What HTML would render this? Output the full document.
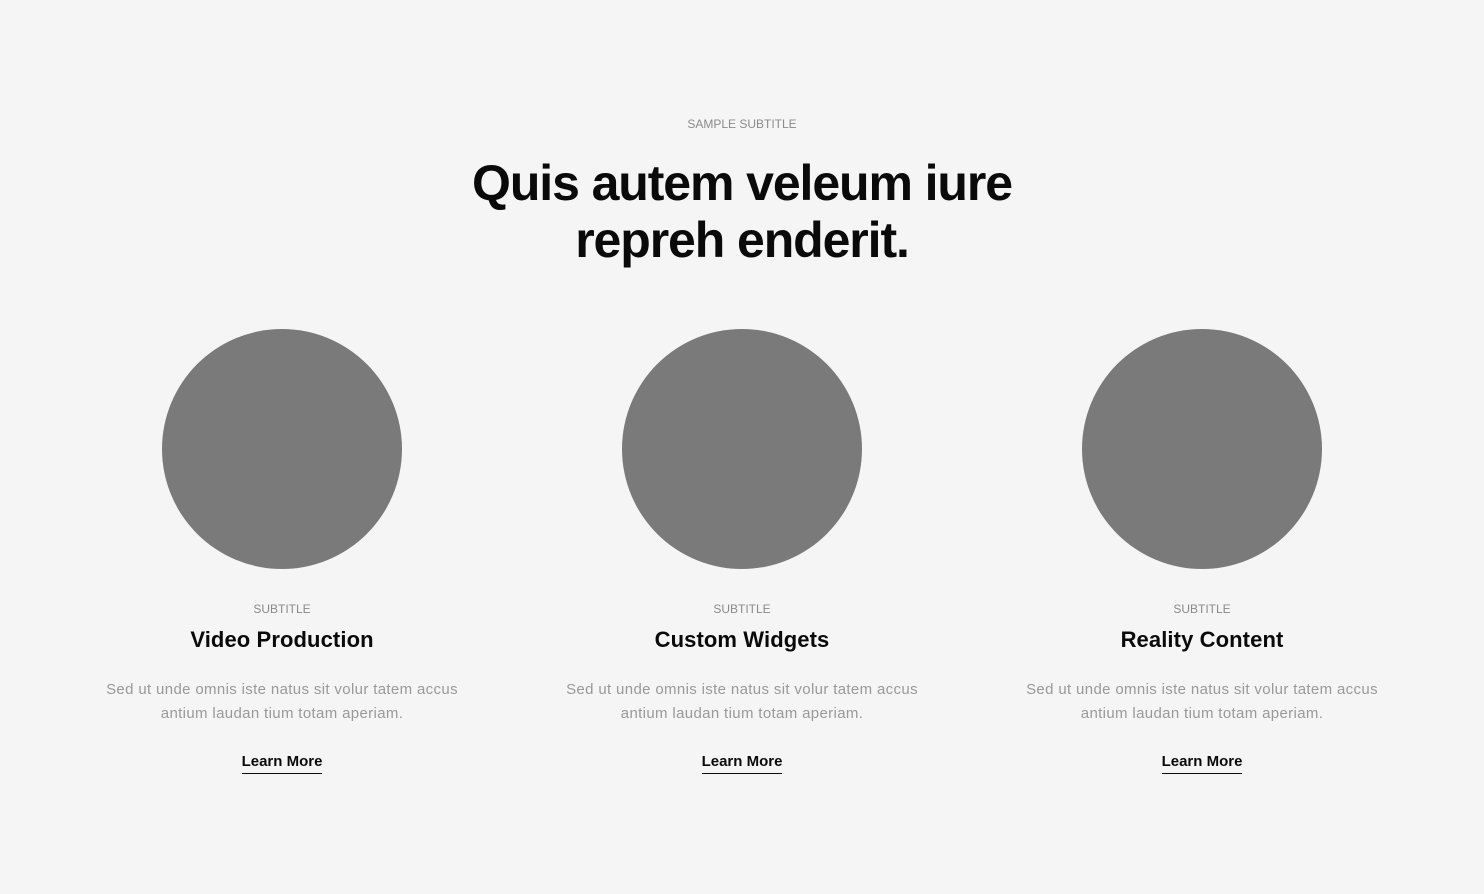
<!DOCTYPE html>
<html><head><meta charset="utf-8"><style>
*{margin:0;padding:0;box-sizing:border-box}
html,body{width:1484px;height:894px;background:#f5f5f5;font-family:"Liberation Sans",sans-serif;overflow:hidden}
.sub{position:absolute;top:117px;left:0;width:1484px;text-align:center;font-size:12px;color:#8a8a8a;letter-spacing:0}
h1{position:absolute;top:155px;left:0;width:1484px;text-align:center;font-size:50px;line-height:57px;font-weight:bold;color:#0a0a0a;letter-spacing:-1.1px}
.col{position:absolute;top:329px;width:460px;text-align:center}
.c{width:240px;height:240px;border-radius:50%;background:#7a7a7a;margin:0 auto}
.s{margin-top:33px;font-size:12px;color:#8a8a8a;line-height:14px}
.t{margin-top:11px;font-size:22px;font-weight:bold;color:#0a0a0a;line-height:26px;letter-spacing:0.1px}
.p{margin-top:25px;font-size:15px;line-height:24px;color:#999;letter-spacing:0.35px}
.l{display:inline-block;margin-top:27px;font-size:15px;font-weight:bold;color:#0a0a0a;border-bottom:1.5px solid #0a0a0a;line-height:18px;padding-bottom:2px}
</style></head><body>
<div class="sub">SAMPLE SUBTITLE</div>
<h1>Quis autem veleum iure<br>repreh enderit.</h1>
<div class="col" style="left:52px"><div class="c"></div><div class="s">SUBTITLE</div><div class="t">Video Production</div><div class="p">Sed ut unde omnis iste natus sit volur tatem accus<br>antium laudan tium totam aperiam.</div><span class="l">Learn More</span></div>
<div class="col" style="left:512px"><div class="c"></div><div class="s">SUBTITLE</div><div class="t">Custom Widgets</div><div class="p">Sed ut unde omnis iste natus sit volur tatem accus<br>antium laudan tium totam aperiam.</div><span class="l">Learn More</span></div>
<div class="col" style="left:972px"><div class="c"></div><div class="s">SUBTITLE</div><div class="t">Reality Content</div><div class="p">Sed ut unde omnis iste natus sit volur tatem accus<br>antium laudan tium totam aperiam.</div><span class="l">Learn More</span></div>
</body></html>
